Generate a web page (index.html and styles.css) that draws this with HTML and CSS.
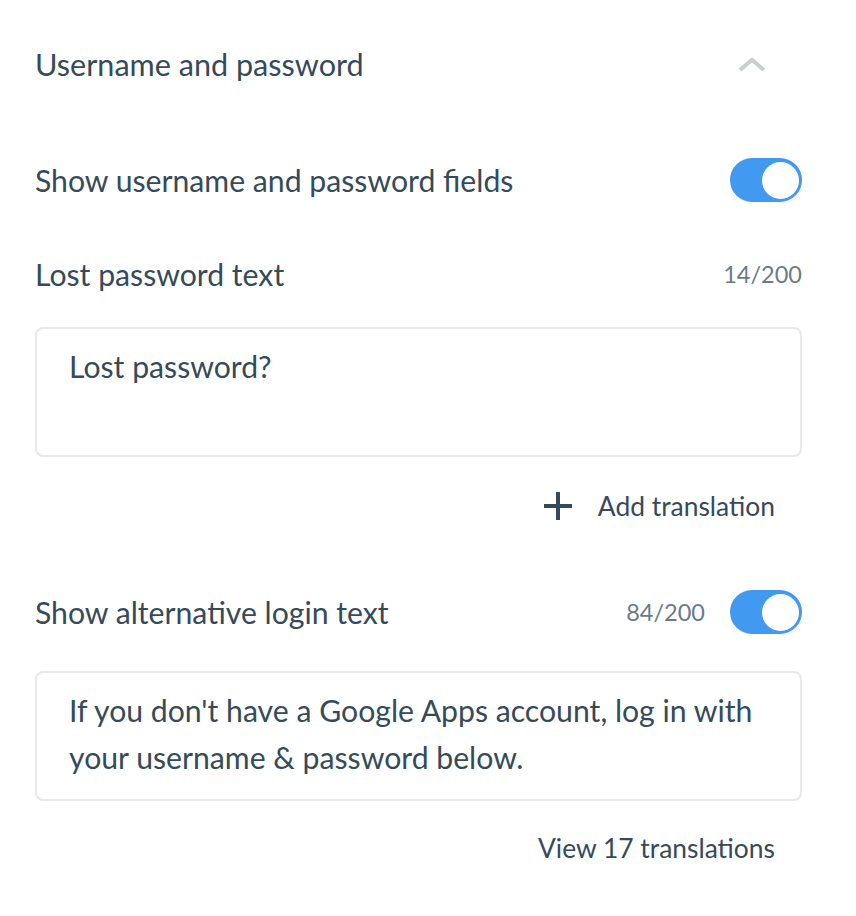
FILE: index.html
```html
<!DOCTYPE html>
<html lang="en">
<head>
<meta charset="utf-8">
<title>Username and password</title>
<link rel="stylesheet" href="styles.css">
</head>
<body>
<div class="panel">
  <div class="header">
    <span class="title">Username and password</span>
    <span class="chevron">
      <svg width="28" height="15" viewBox="0 0 28 15"><polyline points="2,13 14,2.8 26,13" fill="none" stroke="#c9ced3" stroke-width="4"/></svg>
    </span>
  </div>

  <div class="row toggle-row">
    <span class="label">Show username and password fields</span>
    <span class="toggle on"><span class="knob"></span></span>
  </div>

  <div class="row label-row">
    <span class="label">Lost password text</span>
    <span class="counter">14/200</span>
  </div>

  <div class="field">Lost password?</div>

  <div class="action-row">
    <span class="action">
      <svg class="plus" width="28" height="28" viewBox="0 0 28 28"><rect x="0" y="12" width="28" height="4" fill="#34495a"/><rect x="12" y="0" width="4" height="28" fill="#34495a"/></svg>
      <span>Add translation</span>
    </span>
  </div>

  <div class="row toggle-row alt-row">
    <span class="label">Show alternative login text</span>
    <span class="right">
      <span class="counter">84/200</span>
      <span class="toggle on"><span class="knob"></span></span>
    </span>
  </div>

  <div class="field field-2">If you don't have a Google Apps account, log in with your username &amp; password below.</div>

  <div class="action-row view-row">
    <span class="action"><span>View 17 translations</span></span>
  </div>
</div>
</body>
</html>
```

FILE: styles.css
```css
html, body {
  margin: 0;
  padding: 0;
  background: #ffffff;
}

body {
  font-family: Lato, "Noto Sans", "Liberation Sans", sans-serif;
  color: #354a5a;
  font-size: 30.2px;
}

.panel {
  width: 856px;
  box-sizing: border-box;
  padding: 30px 54px 0 35px;
}

.header {
  height: 70px;
  display: flex;
  align-items: center;
  justify-content: space-between;
}

.title {
  font-size: 30.6px;
  line-height: 40px;
}

.chevron {
  display: flex;
  margin-right: 36px;
  padding-bottom: 1px;
}

.row {
  display: flex;
  align-items: center;
  justify-content: space-between;
  line-height: 40px;
}

.toggle-row {
  height: 44px;
  margin-top: 58px;
}

.label-row {
  height: 40px;
  margin-top: 52px;
}

.counter {
  font-size: 23.5px;
  color: #6b7b88;
}

.right {
  display: flex;
  align-items: center;
  gap: 25px;
}

.toggle {
  width: 72px;
  height: 44px;
  border-radius: 22px;
  background: #4299f0;
  box-sizing: border-box;
  padding: 0 3px;
  display: flex;
  align-items: center;
  justify-content: flex-end;
}

.knob {
  width: 37px;
  height: 37px;
  border-radius: 50%;
  background: #ffffff;
}

.field {
  margin-top: 33px;
  height: 130px;
  box-sizing: border-box;
  border: 2px solid #e6e8ea;
  border-radius: 8px;
  padding: 14px 32px 0 32px;
  line-height: 47px;
  font-size: 30.2px;
}

.field-2 {
  margin-top: 37px;
}

.action-row {
  display: flex;
  justify-content: flex-end;
  height: 40px;
  margin-top: 29px;
  padding-right: 27px;
}

.action {
  display: flex;
  align-items: center;
  gap: 26px;
  line-height: 40px;
  font-size: 26.4px;
}

.plus {
  display: block;
}

.alt-row {
  margin-top: 64px;
}

.view-row {
  margin-top: 27px;
}
```
